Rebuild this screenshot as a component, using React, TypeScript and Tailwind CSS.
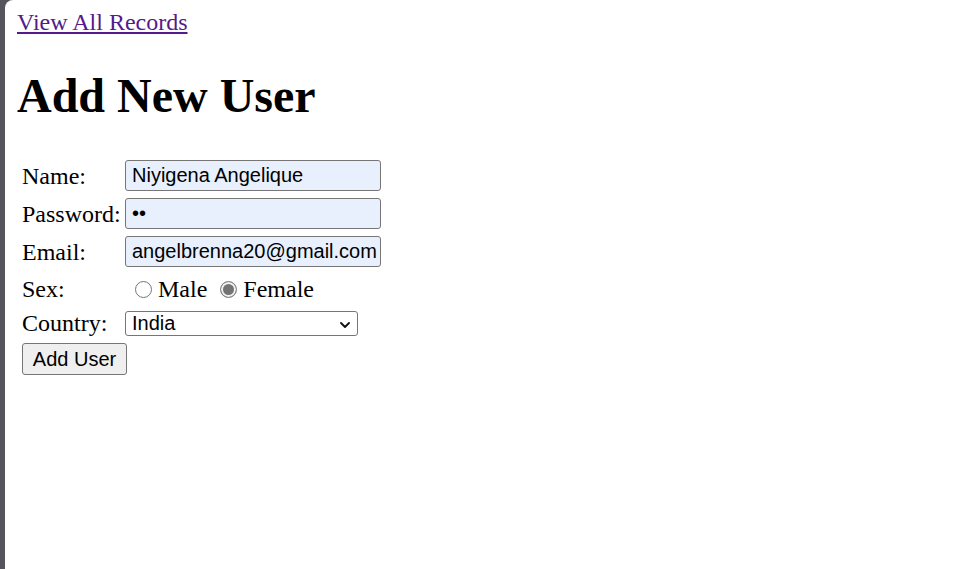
import { useState } from "react";

const serif = "font-['Liberation_Serif','Times_New_Roman',serif]";
const sans = "font-['Liberation_Sans',Arial,sans-serif]";

function App() {
  const [sex, setSex] = useState<string>("Female");

  return (
    <div className="min-h-screen bg-[#56555d] pl-[5px]">
      <div className={`min-h-[569px] bg-white rounded-tl-[8px] pl-[12px] pt-[8px] text-black ${serif}`}>
        <div className="h-[28px] text-[24px] leading-[28px]">
          <a href="#" className="text-[#551a8b] underline">
            View All Records
          </a>
        </div>

        <h1 className="mt-[32px] text-[48px] leading-[56px] font-bold">Add New User</h1>

        <form className="mt-[36px] pl-[5px] flex flex-col text-[24px]" onSubmit={(e) => e.preventDefault()}>
          <div className="flex items-center h-[31px]">
            <label className="w-[103px] leading-[28px]">Name:</label>
            <input
              type="text"
              defaultValue="Niyigena Angelique"
              className={`w-[256px] h-[31px] border border-[#767676] rounded-[3px] bg-[#e8f0fe] pl-[6px] pr-0 text-[20px] outline-none ${sans}`}
            />
          </div>

          <div className="flex items-center h-[31px] mt-[7px]">
            <label className="w-[103px] leading-[28px]">Password:</label>
            <input
              type="password"
              defaultValue="ab"
              className={`w-[256px] h-[31px] border border-[#767676] rounded-[3px] bg-[#e8f0fe] pl-[6px] pr-0 text-[20px] outline-none ${sans}`}
            />
          </div>

          <div className="flex items-center h-[31px] mt-[7px]">
            <label className="w-[103px] leading-[28px]">Email:</label>
            <input
              type="email"
              defaultValue="angelbrenna20@gmail.com"
              className={`w-[256px] h-[31px] border border-[#767676] rounded-[3px] bg-[#e8f0fe] pl-[6px] pr-0 text-[20px] outline-none ${sans}`}
            />
          </div>

          <div className="flex items-center h-[28px] mt-[8px] leading-[28px]">
            <span className="w-[103px]">Sex:</span>
            <label className="flex items-center">
              <input
                type="radio"
                name="sex"
                checked={sex === "Male"}
                onChange={() => setSex("Male")}
                className="appearance-none w-[17px] h-[17px] mt-[1px] ml-[10px] mr-[6px] rounded-full border border-[#767676] bg-white checked:border-[#858585] checked:bg-[#737373] checked:shadow-[inset_0_0_0_2px_#f2f2f2]"
              />
              Male
            </label>
            <label className="flex items-center">
              <input
                type="radio"
                name="sex"
                checked={sex === "Female"}
                onChange={() => setSex("Female")}
                className="appearance-none w-[17px] h-[17px] mt-[1px] ml-[13px] mr-[6px] rounded-full border border-[#767676] bg-white checked:border-[#858585] checked:bg-[#737373] checked:shadow-[inset_0_0_0_2px_#f2f2f2]"
              />
              Female
            </label>
          </div>

          <div className="flex items-center h-[25px] mt-[8px]">
            <label className="w-[103px] leading-[28px] -mt-[2px]">Country:</label>
            <div className="relative">
              <select
                defaultValue="India"
                className={`block appearance-none w-[233px] h-[25px] border border-[#767676] rounded-[3px] bg-white pl-[6px] py-0 text-[20px] leading-[23px] outline-none ${sans}`}
              >
                <option>India</option>
                <option>Rwanda</option>
                <option>Kenya</option>
                <option>Uganda</option>
              </select>
              <svg
                className="absolute right-[8px] top-[11px] pointer-events-none"
                width="10"
                height="6"
                viewBox="0 0 10 6"
                fill="none"
              >
                <path d="M1 1L5 5L9 1" stroke="#111" strokeWidth="1.8" strokeLinecap="round" strokeLinejoin="round" />
              </svg>
            </div>
          </div>

          <div className="mt-[7px]">
            <button
              type="submit"
              className={`block w-[105px] h-[32px] border border-[#767676] rounded-[3px] bg-[#efefef] text-[20px] text-black ${sans}`}
            >
              Add User
            </button>
          </div>
        </form>
      </div>
    </div>
  );
}

export default App;
